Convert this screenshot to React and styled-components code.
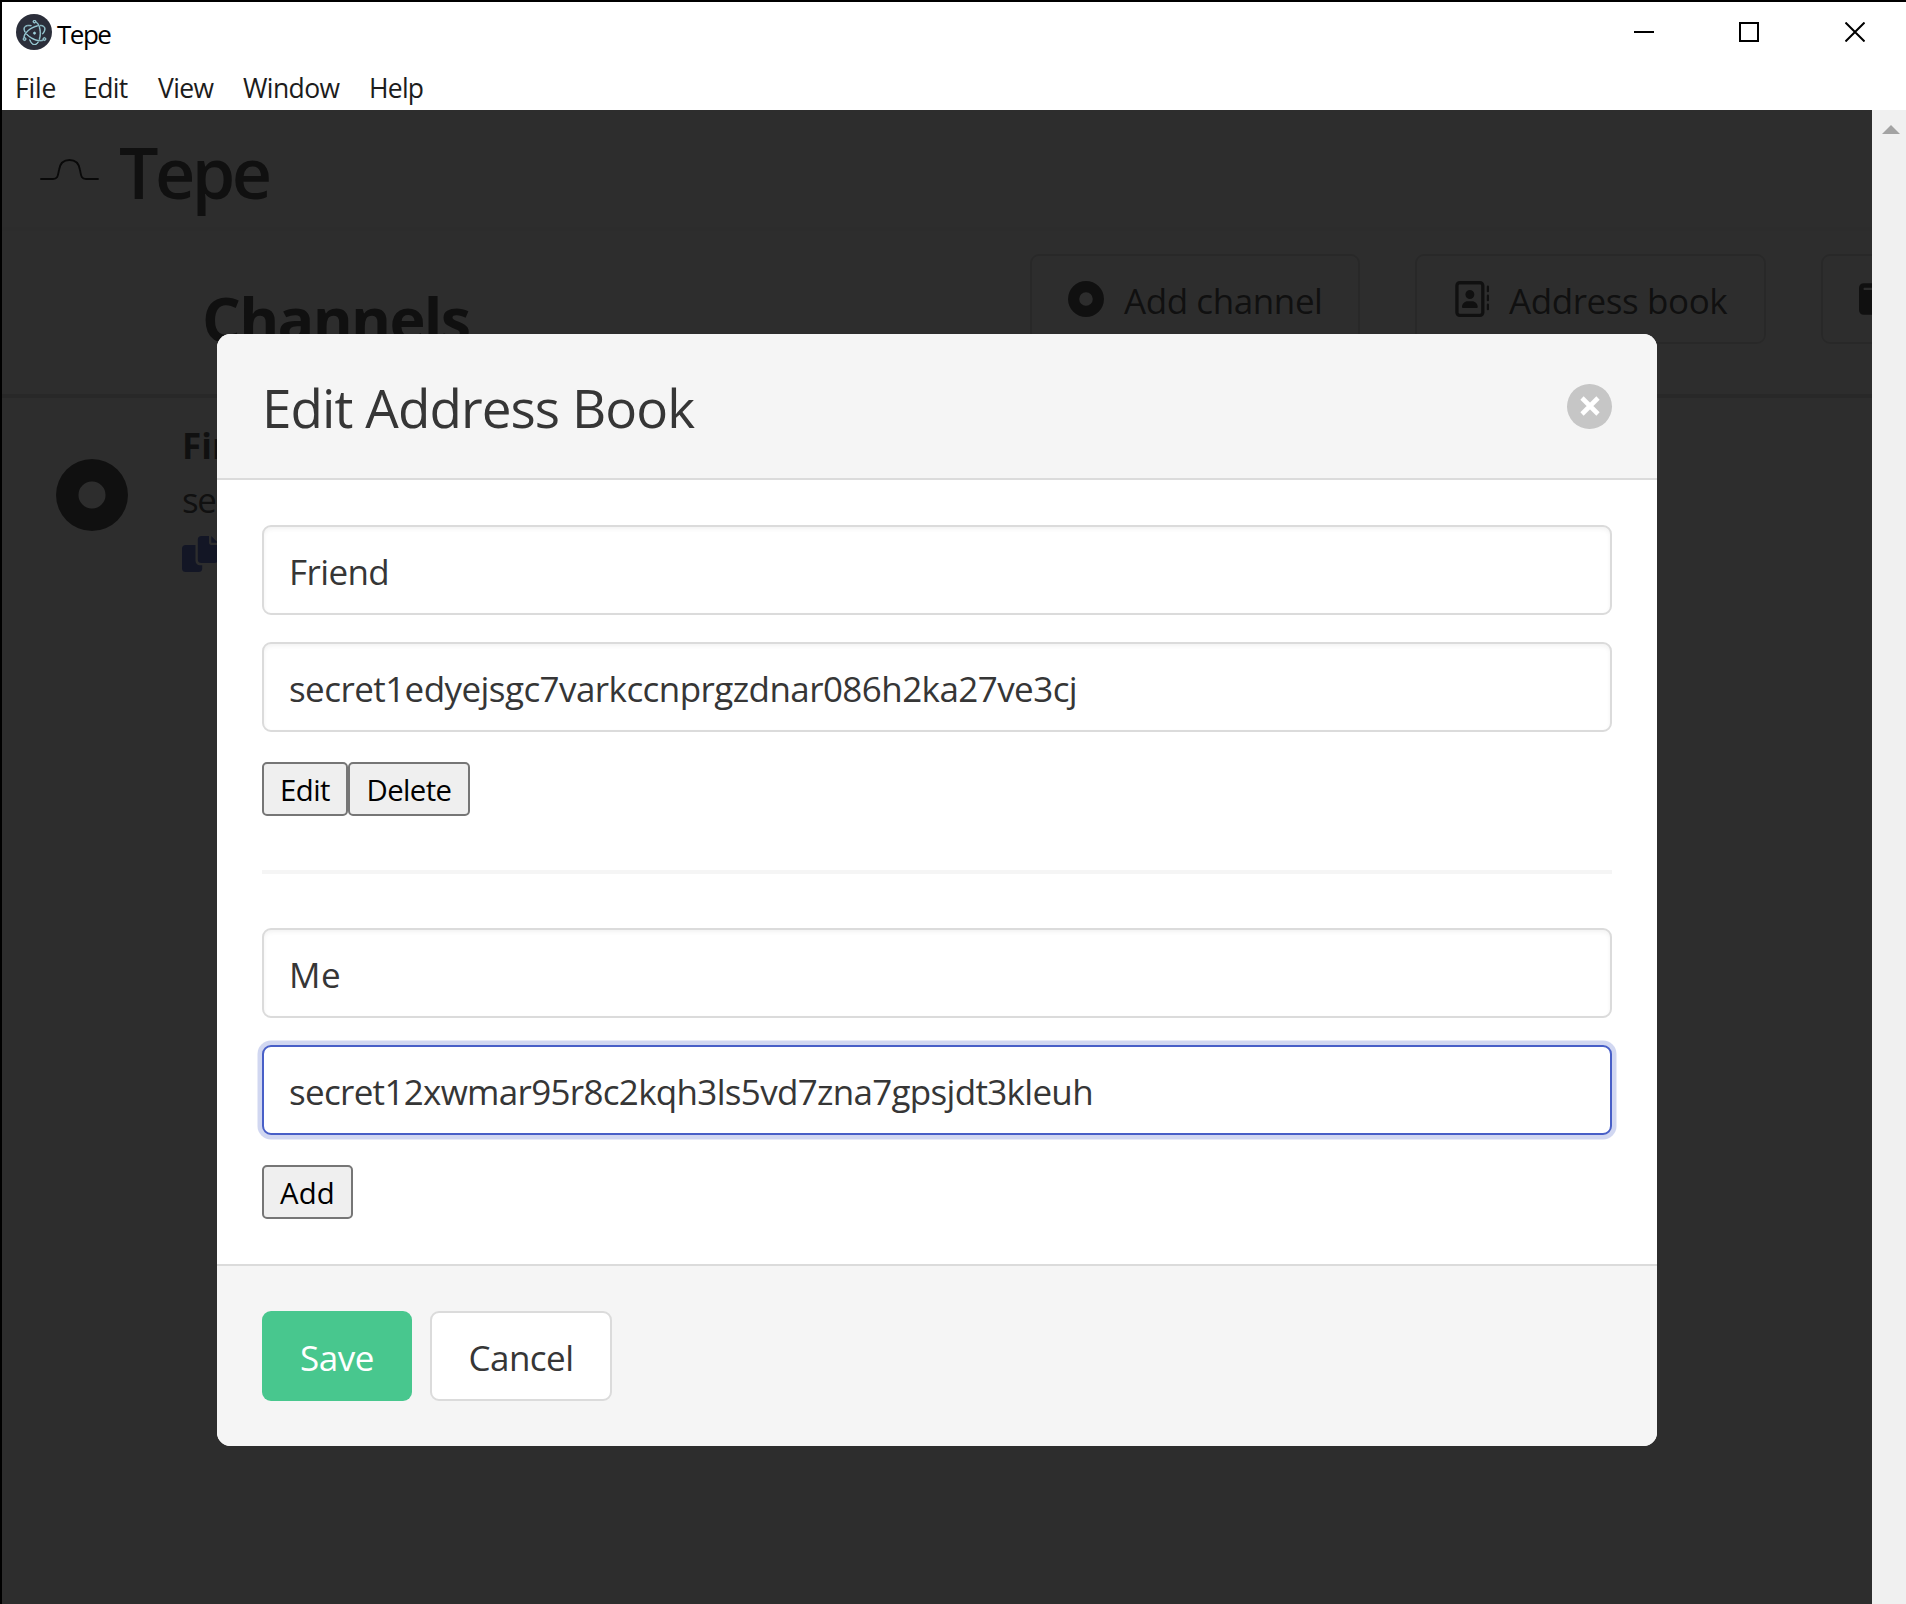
import React from 'react';
import styled, { createGlobalStyle, css } from 'styled-components';
import { FaCircleDot, FaRegAddressBook, FaWallet } from 'react-icons/fa6';
import { SiElectron } from 'react-icons/si';

const GlobalStyle = createGlobalStyle`
  *, *::before, *::after { box-sizing: border-box; }
  html, body { margin: 0; padding: 0; overflow: hidden; }
  body {
    font-family: "Open Sans", "Noto Sans", sans-serif;
    font-size: 35px;
    color: #4a4a4a;
    background: #fff;
  }
  button, input { font-family: inherit; margin: 0; }
`;

const Window = styled.div`
  display: flex;
  flex-direction: column;
  width: 1906px;
  height: 1604px;
  border-top: 2px solid #000;
  border-left: 2px solid #000;
  overflow: hidden;
`;

/* ---------- Native title bar and menu ---------- */

const TitleBar = styled.header`
  display: flex;
  align-items: center;
  flex: none;
  height: 60px;
  padding-left: 14px;
  background: #fff;
`;

const AppBadge = styled.span`
  display: grid;
  place-items: center;
  width: 36px;
  height: 36px;
  border-radius: 50%;
  background: #2b2e3a;
  color: #9fd3dd;

  svg {
    stroke-width: 0.6;
  }
`;

const WindowTitle = styled.span`
  padding: 4px 0 0 5px;
  font-size: 26px;
  line-height: 36px;
  letter-spacing: -1.5px;
  color: #000;
`;

const WindowControls = styled.div`
  display: grid;
  grid-template-columns: 105px 106px 20px;
  margin: 0 41px 0 auto;
`;

const ControlIcon = styled.svg`
  display: block;
  width: 20px;
  height: 20px;
  fill: none;
  stroke: #000;
  stroke-width: 2;
`;

const MenuBar = styled.nav`
  display: flex;
  flex: none;
  height: 48px;
  padding: 3px 0 0 13px;
  background: #fff;
`;

const MenuItem = styled.span`
  width: ${(p) => p.$width}px;
  font-size: 26.5px;
  line-height: 46px;
  letter-spacing: ${(p) => p.$spacing}px;
  color: #1c1c1c;
`;

/* ---------- Page below the modal ---------- */

const Viewport = styled.div`
  position: relative;
  display: flex;
  flex: 1;
  min-height: 0;
`;

const Page = styled.main`
  display: flex;
  flex-direction: column;
  flex: 1;
  min-width: 0;
  overflow: hidden;
  background: #fff;
`;

const Brand = styled.div`
  display: flex;
  align-items: center;
  flex: none;
  gap: 19px;
  height: 117px;
  padding-left: 38px;
  box-shadow: 0 4px 0 #f5f5f5;
`;

const Wave = styled.svg`
  width: 60px;
  height: 24px;
  fill: none;
  stroke: #000;
  stroke-width: 1.9;
  stroke-linecap: round;
`;

const BrandName = styled.h1`
  margin: 0;
  padding-top: 7px;
  font-size: 70px;
  font-weight: 600;
  line-height: 96px;
  letter-spacing: -3.6px;
  color: #363636;
`;

const Toolbar = styled.section`
  display: flex;
  align-items: flex-start;
  flex: none;
  gap: 55px;
  height: 167px;
  padding: 27px 0 0 200px;
`;

const PageTitle = styled.h2`
  flex: none;
  width: 773px;
  margin: 0;
  padding-top: 25px;
  font-size: 61px;
  font-weight: 700;
  line-height: 80px;
  letter-spacing: -1.7px;
  color: #363636;
`;

const ToolButton = styled.button`
  display: flex;
  align-items: center;
  flex: none;
  gap: 20px;
  width: ${(p) => p.$width}px;
  height: 90px;
  padding: 0 0 0 36px;
  border: 2px solid #dbdbdb;
  border-radius: 9px;
  background: #fff;
  color: #363636;
  font-size: 35px;
`;

const ToolLabel = styled.span`
  padding-top: 3px;
  letter-spacing: -0.42px;
  white-space: nowrap;
`;

const Rule = styled.hr`
  flex: none;
  width: 100%;
  height: 4px;
  margin: ${(p) => p.$gap || 0}px 0;
  border: 0;
  background: ${(p) => p.$color};
`;

const Channel = styled.article`
  display: flex;
  align-items: center;
  gap: 54px;
  padding: 20px 0 0 54px;
  color: #363636;
`;

const ChannelBody = styled.div`
  display: flex;
  flex-direction: column;
`;

const ChannelLine = styled.span`
  height: 54px;
  padding-top: 2px;
  line-height: 52px;
  font-weight: ${(p) => (p.$bold ? 700 : 400)};
  letter-spacing: ${(p) => (p.$bold ? 0 : -1.5)}px;
`;

const CopyIcon = styled.svg`
  width: 36px;
  height: 36px;
  margin-top: 10px;
  fill: #485fc7;
`;

const Scrollbar = styled.div`
  display: flex;
  justify-content: center;
  flex: none;
  width: 34px;
  padding: 15px 0 0 4px;
  background: #f0f0f0;
`;

const ScrollArrow = styled.svg`
  width: 18px;
  height: 9px;
  fill: #a3a3a3;
`;

/* ---------- Modal ---------- */

const Overlay = styled.div`
  position: absolute;
  inset: 0 34px 0 0;
  display: flex;
  justify-content: center;
  align-items: flex-start;
  padding-top: 224px;
  background: rgba(10, 10, 10, 0.86);
`;

const Card = styled.div`
  width: 1440px;
  border-radius: 13.5px;
  overflow: hidden;
  background: #fff;
`;

const CardHead = styled.div`
  display: flex;
  align-items: center;
  justify-content: space-between;
  height: 146px;
  padding: 0 45px;
  border-bottom: 2px solid #dbdbdb;
  background: #f5f5f5;
`;

const CardTitle = styled.p`
  margin: 0;
  padding: 4px 0 0;
  font-size: 53px;
  line-height: 74px;
  letter-spacing: -0.92px;
  color: #363636;
`;

const CloseButton = styled.button`
  display: grid;
  place-items: center;
  width: 45px;
  height: 45px;
  padding: 0;
  border: 0;
  border-radius: 50%;
  background: rgba(10, 10, 10, 0.2);
`;

const CloseMark = styled.svg`
  width: 22px;
  height: 22px;
  stroke: #fff;
  stroke-width: 4.6;
`;

const CardBody = styled.div`
  height: 784px;
  padding: 45px;
`;

const Entry = styled.div`
  display: flex;
  flex-direction: column;
  gap: 27px;
`;

const Field = styled.input`
  display: block;
  width: 100%;
  height: 90px;
  padding: 3px 25px 0;
  border: 2px solid #dbdbdb;
  border-radius: 9px;
  outline: none;
  background: #fff;
  box-shadow: inset 0 2.25px 4.5px rgba(10, 10, 10, 0.05);
  color: #363636;
  font-size: 35px;
  letter-spacing: ${(p) => p.$spacing}px;
  ${(p) =>
    p.$active &&
    css`
      border-color: #485fc7;
      box-shadow: 0 0 0 4.5px rgba(72, 95, 199, 0.25);
    `}
`;

const EntryActions = styled.div`
  display: flex;
  padding-top: 3px;
`;

const PlainButton = styled.button`
  width: ${(p) => p.$width}px;
  height: 54px;
  padding: 2px 0 0;
  border: 2px solid #767676;
  border-radius: 5px;
  background: #efefef;
  color: #000;
  font-size: 29.3px;
  letter-spacing: ${(p) => p.$spacing}px;
`;

const CardFoot = styled.div`
  display: flex;
  gap: 18px;
  height: 182px;
  padding: 45px;
  border-top: 2px solid #dbdbdb;
  background: #f5f5f5;
`;

const FootButton = styled.button`
  width: ${(p) => p.$width}px;
  height: 90px;
  padding: 3px 0 0;
  border: 2px solid ${(p) => (p.$primary ? 'transparent' : '#dbdbdb')};
  border-radius: 9px;
  background: ${(p) => (p.$primary ? '#48c78e' : '#fff')};
  color: ${(p) => (p.$primary ? '#fff' : '#363636')};
  font-size: 35px;
  letter-spacing: -0.5px;
`;

const menu = [
  { label: 'File', width: 68, spacing: -0.2 },
  { label: 'Edit', width: 75, spacing: -0.6 },
  { label: 'View', width: 85, spacing: -0.6 },
  { label: 'Window', width: 126, spacing: -0.6 },
  { label: 'Help', width: 60, spacing: -0.75 },
];

export default function App() {
  return (
    <>
      <GlobalStyle />
      <Window>
        <TitleBar>
          <AppBadge>
            <SiElectron size={25} />
          </AppBadge>
          <WindowTitle>Tepe</WindowTitle>
          <WindowControls>
            <ControlIcon viewBox="0 0 20 20"><path d="M0 10H20" /></ControlIcon>
            <ControlIcon viewBox="0 0 20 20"><rect x="1" y="1" width="18" height="18" /></ControlIcon>
            <ControlIcon viewBox="0 0 20 20"><path d="M0.5 0.5L19.5 19.5M19.5 0.5L0.5 19.5" /></ControlIcon>
          </WindowControls>
        </TitleBar>
        <MenuBar>
          {menu.map((m) => (
            <MenuItem key={m.label} $width={m.width} $spacing={m.spacing}>{m.label}</MenuItem>
          ))}
        </MenuBar>

        <Viewport>
          <Page>
            <Brand>
              <Wave viewBox="0 0 60 24">
                <path d="M1 22H13C18.5 22 18 17 19 13C20 6 24 3 29.5 3C35 3 39 6 40 13C41 17 40.5 22 46 22H58" />
              </Wave>
              <BrandName>Tepe</BrandName>
            </Brand>
            <Toolbar>
              <PageTitle>Channels</PageTitle>
              <ToolButton $width={330}>
                <FaCircleDot size={36} />
                <ToolLabel>Add channel</ToolLabel>
              </ToolButton>
              <ToolButton $width={351}>
                <FaRegAddressBook size={36} />
                <ToolLabel>Address book</ToolLabel>
              </ToolButton>
              <ToolButton $width={240}>
                <FaWallet size={36} />
              </ToolButton>
            </Toolbar>
            <Rule $color="#dbdbdb" />
            <Channel>
              <FaCircleDot size={72} />
              <ChannelBody>
                <ChannelLine $bold>First</ChannelLine>
                <ChannelLine>secret</ChannelLine>
                <CopyIcon viewBox="0 0 512 512">
                  <path d="M384 96V0H272c-26.500 0-48 21.500-48 48v288c0 26.500 21.500 48 48 48h192c26.500 0 48-21.500 48-48V128h-95.100C398.400 128 384 113.600 384 96zM416 0v96h96L416 0zM192 352V128H48c-26.500 0-48 21.500-48 48v288c0 26.500 21.500 48 48 48h192c26.500 0 48-21.500 48-48v-48h-32C220.700 416 192 387.300 192 352z" />
                </CopyIcon>
              </ChannelBody>
            </Channel>
          </Page>
          <Scrollbar>
            <ScrollArrow viewBox="0 0 18 9"><path d="M9 0L18 9H0Z" /></ScrollArrow>
          </Scrollbar>

          <Overlay>
            <Card>
              <CardHead>
                <CardTitle>Edit Address Book</CardTitle>
                <CloseButton aria-label="close">
                  <CloseMark viewBox="0 0 22 22"><path d="M3 3L19 19M19 3L3 19" /></CloseMark>
                </CloseButton>
              </CardHead>
              <CardBody>
                <Entry>
                  <Field $spacing={-0.6} defaultValue="Friend" />
                  <Field $spacing={-0.566} defaultValue="secret1edyejsgc7varkccnprgzdnar086h2ka27ve3cj" />
                  <EntryActions>
                    <PlainButton $width={86} $spacing={-0.5}>Edit</PlainButton>
                    <PlainButton $width={122} $spacing={-0.6}>Delete</PlainButton>
                  </EntryActions>
                </Entry>
                <Rule $color="#f5f5f5" $gap={54} />
                <Entry>
                  <Field $spacing={0.6} defaultValue="Me" />
                  <Field $active $spacing={-0.69} defaultValue="secret12xwmar95r8c2kqh3ls5vd7zna7gpsjdt3kleuh" />
                  <EntryActions>
                    <PlainButton $width={91} $spacing={0.2}>Add</PlainButton>
                  </EntryActions>
                </Entry>
              </CardBody>
              <CardFoot>
                <FootButton $primary $width={150}>Save</FootButton>
                <FootButton $width={182}>Cancel</FootButton>
              </CardFoot>
            </Card>
          </Overlay>
        </Viewport>
      </Window>
    </>
  );
}
